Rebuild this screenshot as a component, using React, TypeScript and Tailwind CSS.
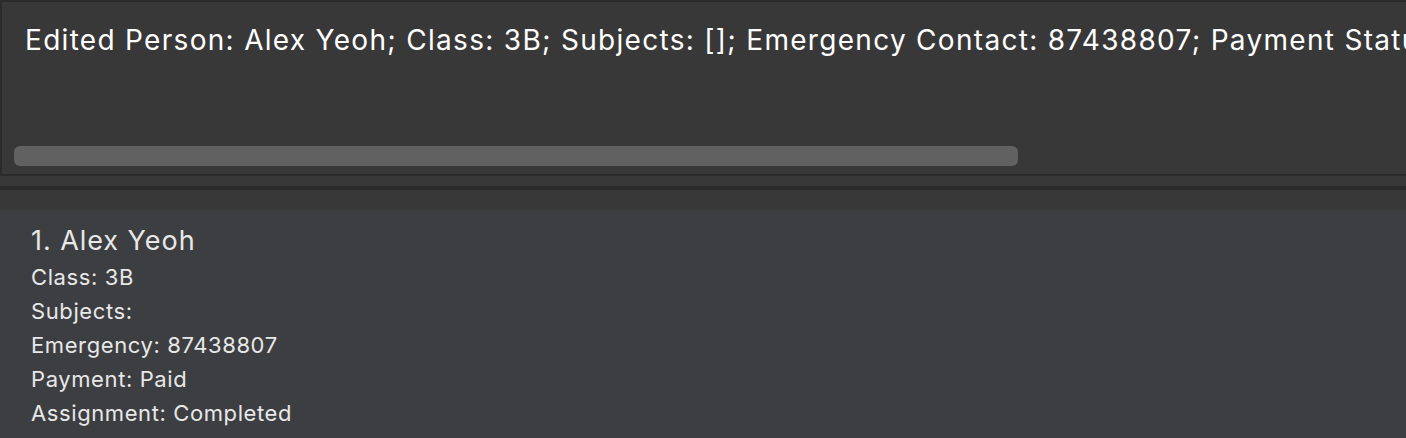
import React from "react";

export default function App() {
  const details = [
    "Class: 3B",
    "Subjects:",
    "Emergency: 87438807",
    "Payment: Paid",
    "Assignment: Completed",
  ];
  return (
    <div
      className="w-[1406px] h-[438px] overflow-hidden bg-[#383838] flex flex-col"
      style={{ fontFamily: "Inter, 'Noto Sans', sans-serif" }}
    >
      <div className="h-[176px] shrink-0 border-t-2 border-l-2 border-b-2 border-[#2b2b2b] bg-[#383838] flex flex-col justify-between overflow-hidden">
        <div className="pl-[23px] pt-[20px] text-[28px] leading-[36px] tracking-[1.3px] text-white whitespace-nowrap">
          Edited Person: Alex Yeoh; Class: 3B; Subjects: []; Emergency Contact: 87438807; Payment Status: Paid; Assignment Status: Completed
        </div>
        <div className="pl-[12px] pb-[8px]">
          <div className="w-[1004px] h-[20px] rounded-[6px] bg-[#616161]" />
        </div>
      </div>
      <div className="h-[10px] shrink-0" />
      <div className="h-[4px] shrink-0 bg-[#2b2b2b]" />
      <div className="h-[20px] shrink-0" />
      <div className="flex-1 bg-[#3d3e41] pl-[31px] pt-[11px] text-[#e8e8e8]">
        <div className="text-[27px] leading-[39px] tracking-[0.95px]">1. Alex Yeoh</div>
        {details.map((d) => (
          <div key={d} className="text-[22px] leading-[34px] tracking-[0.6px]">
            {d}
          </div>
        ))}
      </div>
    </div>
  );
}
